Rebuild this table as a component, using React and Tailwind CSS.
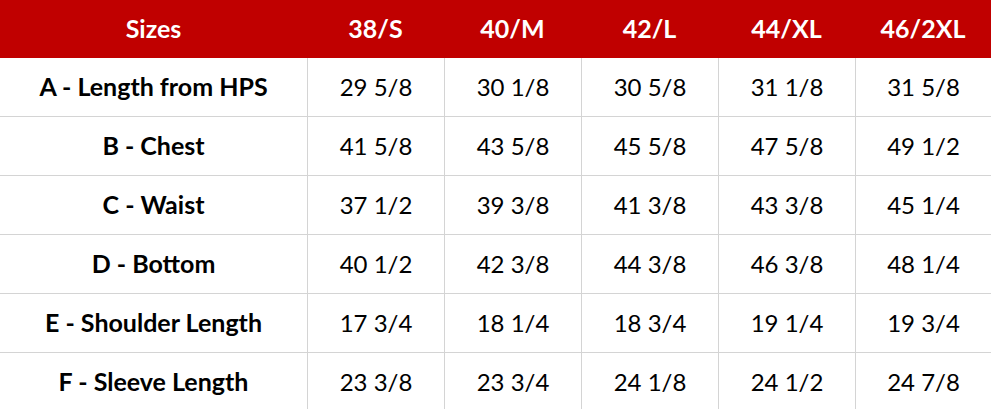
import React from "react";

const sizes = ["38/S", "40/M", "42/L", "44/XL", "46/2XL"];

const rows = [
  ["A - Length from HPS", "29 5/8", "30 1/8", "30 5/8", "31 1/8", "31 5/8"],
  ["B - Chest", "41 5/8", "43 5/8", "45 5/8", "47 5/8", "49 1/2"],
  ["C - Waist", "37 1/2", "39 3/8", "41 3/8", "43 3/8", "45 1/4"],
  ["D - Bottom", "40 1/2", "42 3/8", "44 3/8", "46 3/8", "48 1/4"],
  ["E - Shoulder Length", "17 3/4", "18 1/4", "18 3/4", "19 1/4", "19 3/4"],
  ["F - Sleeve Length", "23 3/8", "23 3/4", "24 1/8", "24 1/2", "24 7/8"],
];

const cols = "grid grid-cols-[307px_137px_137px_137px_137px_1fr]";

export default function App() {
  return (
    <div className="w-[991px] h-[409px] overflow-hidden bg-white font-['Lato',sans-serif] text-black">
      <div className={`${cols} h-[58px] bg-[#c00000] text-white font-bold text-[25px]`}>
        <div className="flex items-center justify-center">Sizes</div>
        {sizes.map((s) => (
          <div key={s} className="flex items-center justify-center">
            {s}
          </div>
        ))}
      </div>
      {rows.map((r) => (
        <div key={r[0]} className={`${cols} h-[59px] border-b border-[#d4d4d4]`}>
          <div className="flex items-center justify-center font-bold text-[25px]">{r[0]}</div>
          {r.slice(1).map((v, i) => (
            <div
              key={i}
              className="flex items-center justify-center border-l border-[#d4d4d4] text-[24px]"
            >
              {v}
            </div>
          ))}
        </div>
      ))}
    </div>
  );
}
